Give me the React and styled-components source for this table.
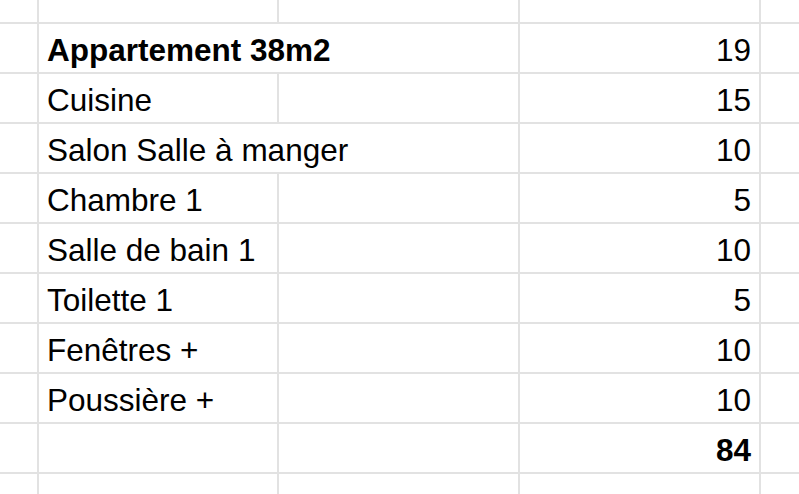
import React from "react";
import styled, { createGlobalStyle } from "styled-components";

const Global = createGlobalStyle`
  html, body { margin: 0; padding: 0; background: #fff; }
  body { font-family: "Liberation Sans", Arial, sans-serif; }
`;

const Sheet = styled.div`
  display: grid;
  grid-template-columns: 37px 238px 239px 239px 1fr;
  grid-template-rows: 22px repeat(9, 48px) 20px;
  gap: 2px;
  background: #e2e2e2;
  width: 799px;
  height: 494px;
  overflow: hidden;
`;

const Cell = styled.div`
  background: #fff;
  display: flex;
  align-items: flex-end;
  justify-content: ${(p) => (p.$num ? "flex-end" : "flex-start")};
  padding: 0 ${(p) => (p.$num ? "8px" : "0")} 4px ${(p) => (p.$num ? "0" : "8px")};
  grid-column: ${(p) => (p.$span ? `span ${p.$span}` : "auto")};
  font-size: 31.5px;
  line-height: 36px;
  font-weight: ${(p) => (p.$bold ? 700 : 400)};
  color: #000;
  white-space: nowrap;
  overflow: visible;
`;

const rows = [
  { label: "Appartement 38m2", value: "19", bold: true, span: 2 },
  { label: "Cuisine", value: "15" },
  { label: "Salon Salle à manger", value: "10", span: 2 },
  { label: "Chambre 1", value: "5" },
  { label: "Salle de bain 1", value: "10" },
  { label: "Toilette 1", value: "5" },
  { label: "Fenêtres +", value: "10" },
  { label: "Poussière +", value: "10" },
  { label: "", value: "84", totalBold: true },
];

export default function App() {
  return (
    <>
      <Global />
      <Sheet>
        <Cell />
        <Cell />
        <Cell />
        <Cell />
        <Cell />
        {rows.map((r, i) => (
          <React.Fragment key={i}>
            <Cell />
            <Cell $bold={r.bold} $span={r.span}>{r.label}</Cell>
            {!r.span && <Cell />}
            <Cell $num $bold={r.totalBold}>{r.value}</Cell>
            <Cell />
          </React.Fragment>
        ))}
        <Cell />
        <Cell />
        <Cell />
        <Cell />
        <Cell />
      </Sheet>
    </>
  );
}
